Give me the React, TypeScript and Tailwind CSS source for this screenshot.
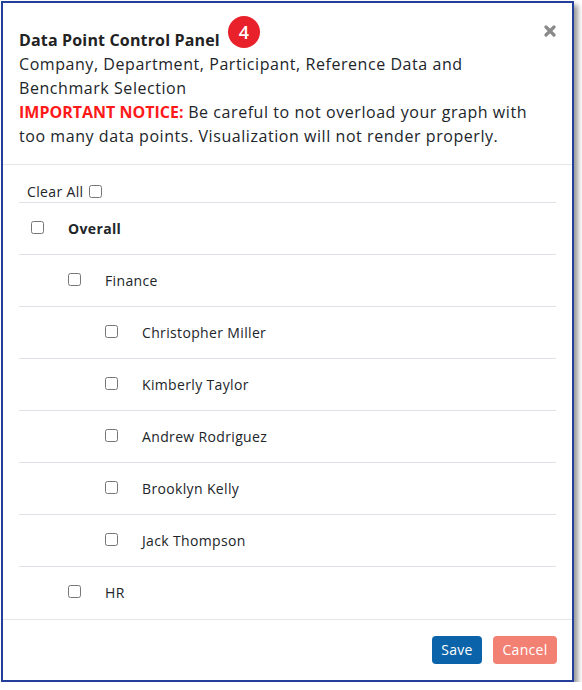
import React from 'react';

// Data point selection modal with nested company / department / participant rows

interface TreeRow {
  label: string;
  level: number;
  bold?: boolean;
}

const rows: TreeRow[] = [
  { label: 'Overall', level: 0, bold: true },
  { label: 'Finance', level: 1 },
  { label: 'Christopher Miller', level: 2 },
  { label: 'Kimberly Taylor', level: 2 },
  { label: 'Andrew Rodriguez', level: 2 },
  { label: 'Brooklyn Kelly', level: 2 },
  { label: 'Jack Thompson', level: 2 },
  { label: 'HR', level: 1 },
];

const indent = ['pl-3', 'pl-[49px]', 'pl-[86px]'];

function CloseIcon() {
  return (
    <svg width="12" height="12" viewBox="0 0 12 12" aria-hidden="true">
      <path d="M2 2 L10 10 M10 2 L2 10" stroke="#8a8a8a" strokeWidth="3.2" strokeLinecap="round" />
    </svg>
  );
}

export default function App() {
  return (
    <div className="pl-px pt-px font-['Open_Sans',sans-serif] text-[#212529]">
      <div className="w-[573px] h-[681px] border-2 border-[#233f9b] bg-white flex flex-col shadow-[4px_4px_5px_rgba(0,0,0,0.4)]">
        {/* Header */}
        <div className="relative border-b border-[#e3e5e8] pl-4 pr-4 pt-[25px] pb-[16px]">
          <h2 className="text-base leading-6 font-bold text-[#222] tracking-[0.01em]">Data Point Control Panel</h2>
          <p className="w-[512px] text-base leading-6 tracking-[0.035em]">
            Company, Department, Participant, Reference Data and Benchmark Selection
          </p>
          <p className="w-[512px] text-base leading-6 tracking-[0.035em]">
            <strong className="font-bold text-[#ff1a1a] tracking-normal">IMPORTANT NOTICE:</strong> Be careful to not
            overload your graph with too many data points. Visualization will not render properly.
          </p>

          {/* Step badge */}
          <span className="absolute left-[225px] top-[13px] w-8 h-8 rounded-full bg-[#e8212b] text-white text-lg font-semibold flex items-center justify-center">
            4
          </span>

          <button className="absolute right-[16px] top-[22px] p-0">
            <CloseIcon />
          </button>
        </div>

        {/* Body */}
        <div className="flex-1 px-4 text-sm tracking-[0.025em]">
          <div className="pl-2 pt-4 h-[37px] flex items-center gap-[6px] leading-[21px]">
            <span>Clear All</span>
            <input type="checkbox" className="m-0 w-[13px] h-[13px]" />
          </div>
          {rows.map((row) => (
            <div
              key={row.label}
              className={`h-[52px] border-t border-[#dee2e6] flex items-center gap-6 ${indent[row.level]}`}
            >
              <input type="checkbox" className="m-0 w-[13px] h-[13px] -mt-[3px]" />
              <span className={row.bold ? 'font-bold' : ''}>{row.label}</span>
            </div>
          ))}
        </div>

        {/* Footer */}
        <div className="border-t border-[#e3e5e8] px-[15px] py-4 flex justify-end gap-[11px] text-sm tracking-[0.02em]">
          <button className="h-7 w-[50px] rounded bg-[#0b63a9] text-white">Save</button>
          <button className="h-7 w-16 rounded bg-[#f28174] text-white">Cancel</button>
        </div>
      </div>
    </div>
  );
}
